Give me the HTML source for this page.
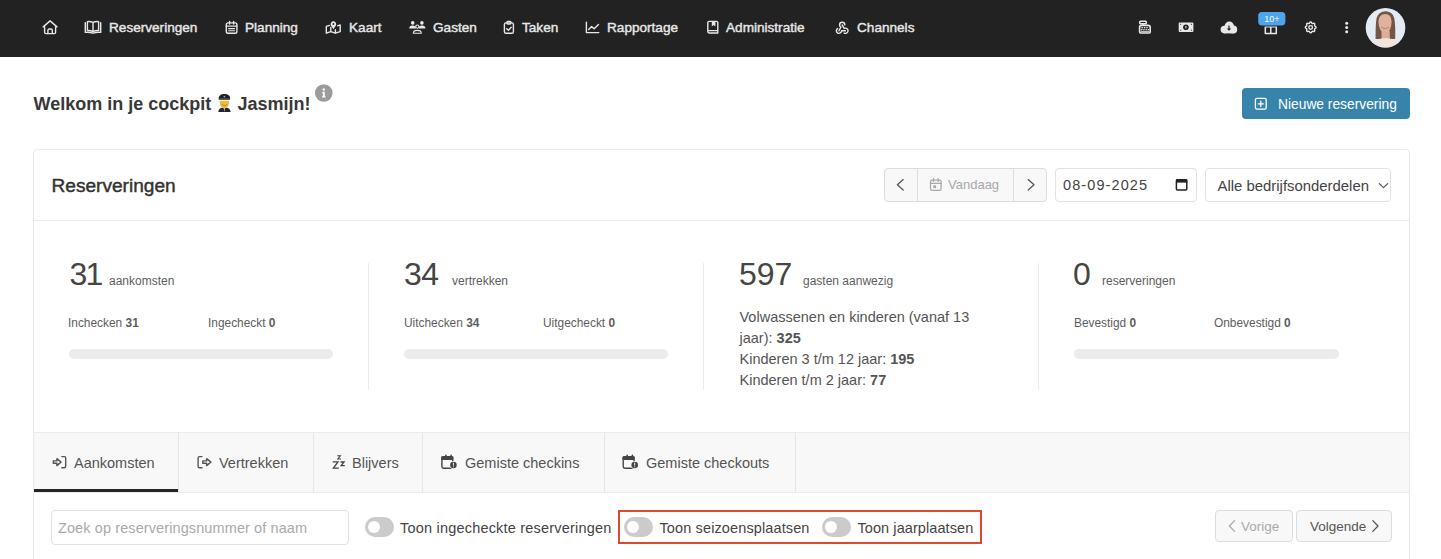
<!DOCTYPE html>
<html><head><meta charset="utf-8">
<style>
*{box-sizing:border-box;margin:0;padding:0}
html,body{width:1441px;height:559px;overflow:hidden;background:#fff;font-family:"Liberation Sans",sans-serif;color:#333}
.t{position:absolute;white-space:nowrap;line-height:1}
#nav{position:absolute;left:0;top:0;width:1441px;height:57px;background:#222}
.ni{color:#e8e8e8;font-size:13.6px;font-weight:normal;-webkit-text-stroke:0.4px #e8e8e8;top:21.3px}
svg{display:block}
#ov{position:absolute;left:0;top:0;width:1441px;height:559px}
.box{position:absolute}
</style></head><body>
<div id="nav"></div>
<div class="t ni" style="left:109px">Reserveringen</div>
<div class="t ni" style="left:245px">Planning</div>
<div class="t ni" style="left:349px">Kaart</div>
<div class="t ni" style="left:433px">Gasten</div>
<div class="t ni" style="left:522px">Taken</div>
<div class="t ni" style="left:607px">Rapportage</div>
<div class="t ni" style="left:726px">Administratie</div>
<div class="t ni" style="left:857px">Channels</div>

<!-- title -->
<div class="t" style="left:33.5px;top:94.5px;font-size:18px;font-weight:bold;color:#383838">Welkom in je cockpit</div>
<div class="t" style="left:237.5px;top:94.5px;font-size:18px;font-weight:bold;color:#383838">Jasmijn!</div>

<!-- new button -->
<div class="box" style="left:1242px;top:88px;width:168px;height:31px;border-radius:4px;background:#3784aa"></div>
<div class="t" style="left:1278px;top:98px;font-size:13.8px;color:#fff">Nieuwe reservering</div>

<!-- card -->
<div class="box" style="left:33px;top:149px;width:1377px;height:430px;border:1px solid #e9e9e9;border-radius:4px"></div>
<div class="box" style="left:34px;top:220px;width:1375px;height:1px;background:#ececec"></div>
<div class="t" style="left:51.5px;top:176px;font-size:19.1px;-webkit-text-stroke:0.45px #333;color:#333">Reserveringen</div>

<!-- button group -->
<div class="box" style="left:884px;top:168px;width:163px;height:34px;border:1px solid #dcdcdc;border-radius:4px;background:#f8f8f8"></div>
<div class="box" style="left:917px;top:169px;width:1px;height:32px;background:#dcdcdc"></div>
<div class="box" style="left:1013px;top:169px;width:1px;height:32px;background:#dcdcdc"></div>
<div class="t" style="left:948px;top:178px;font-size:13px;color:#a8a8a8">Vandaag</div>
<!-- date -->
<div class="box" style="left:1055px;top:168px;width:142px;height:34px;border:1px solid #e2e2e2;border-radius:4px;background:#fff"></div>
<div class="t" style="left:1063px;top:178px;font-size:14.5px;letter-spacing:1.1px;color:#444">08-09-2025</div>
<!-- select -->
<div class="box" style="left:1205px;top:168px;width:186px;height:34px;border:1px solid #e2e2e2;border-radius:4px;background:#fff"></div>
<div class="t" style="left:1217.5px;top:178.5px;font-size:14.9px;color:#444">Alle bedrijfsonderdelen</div>

<!-- stats -->
<div class="t" style="left:69.5px;top:257.5px;font-size:32px;letter-spacing:-1.8px;color:#454545">31</div>
<div class="t" style="left:109px;top:275px;font-size:12px;color:#5e5e5e">aankomsten</div>
<div class="t" style="left:68px;top:318px;font-size:11.9px;color:#5e5e5e">Inchecken <b>31</b></div>
<div class="t" style="left:208px;top:318px;font-size:11.9px;color:#5e5e5e">Ingecheckt <b>0</b></div>
<div class="box" style="left:69px;top:349px;width:264px;height:10px;border-radius:5px;background:#ececec"></div>
<div class="box" style="left:368px;top:263px;width:1px;height:127px;background:#ececec"></div>

<div class="t" style="left:404px;top:257.5px;font-size:32px;letter-spacing:-0.6px;color:#454545">34</div>
<div class="t" style="left:452px;top:275px;font-size:12px;color:#5e5e5e">vertrekken</div>
<div class="t" style="left:404px;top:318px;font-size:11.9px;color:#5e5e5e">Uitchecken <b>34</b></div>
<div class="t" style="left:543px;top:318px;font-size:11.9px;color:#5e5e5e">Uitgecheckt <b>0</b></div>
<div class="box" style="left:404px;top:349px;width:264px;height:10px;border-radius:5px;background:#ececec"></div>
<div class="box" style="left:703px;top:263px;width:1px;height:127px;background:#ececec"></div>

<div class="t" style="left:739px;top:257.5px;font-size:32px;color:#454545">597</div>
<div class="t" style="left:803px;top:275px;font-size:12px;color:#5e5e5e">gasten aanwezig</div>
<div class="t" style="left:739.5px;top:307px;font-size:14.5px;color:#555;line-height:21px;white-space:normal;width:250px">Volwassenen en kinderen (vanaf 13<br>jaar): <b>325</b><br>Kinderen 3 t/m 12 jaar: <b>195</b><br>Kinderen t/m 2 jaar: <b>77</b></div>
<div class="box" style="left:1038px;top:263px;width:1px;height:127px;background:#ececec"></div>

<div class="t" style="left:1073px;top:257.5px;font-size:32px;color:#454545">0</div>
<div class="t" style="left:1102px;top:275px;font-size:12px;color:#5e5e5e">reserveringen</div>
<div class="t" style="left:1074px;top:318px;font-size:11.9px;color:#5e5e5e">Bevestigd <b>0</b></div>
<div class="t" style="left:1214px;top:318px;font-size:11.9px;color:#5e5e5e">Onbevestigd <b>0</b></div>
<div class="box" style="left:1074px;top:349px;width:265px;height:10px;border-radius:5px;background:#ececec"></div>

<!-- tabs -->
<div class="box" style="left:34px;top:432px;width:1375px;height:61px;background:#f8f8f8;border-top:1px solid #ebebeb;border-bottom:1px solid #ebebeb"></div>
<div class="box" style="left:178px;top:433px;width:1px;height:59px;background:#e6e6e6"></div>
<div class="box" style="left:313px;top:433px;width:1px;height:59px;background:#e6e6e6"></div>
<div class="box" style="left:422px;top:433px;width:1px;height:59px;background:#e6e6e6"></div>
<div class="box" style="left:604px;top:433px;width:1px;height:59px;background:#e6e6e6"></div>
<div class="box" style="left:795px;top:433px;width:1px;height:59px;background:#e6e6e6"></div>
<div class="box" style="left:34px;top:489px;width:144px;height:3px;background:#252525"></div>
<div class="t" style="left:74px;top:456px;font-size:14.5px;color:#555">Aankomsten</div>
<div class="t" style="left:219px;top:456px;font-size:14.5px;color:#555">Vertrekken</div>
<div class="t" style="left:352px;top:456px;font-size:14.5px;color:#555">Blijvers</div>
<div class="t" style="left:465px;top:456px;font-size:14.5px;color:#555">Gemiste checkins</div>
<div class="t" style="left:646px;top:456px;font-size:14.5px;color:#555">Gemiste checkouts</div>

<!-- filter row -->
<div class="box" style="left:51px;top:510px;width:298px;height:35px;border:1px solid #e2e2e2;border-radius:4px;background:#fff"></div>
<div class="t" style="left:58px;top:521px;font-size:14.5px;letter-spacing:0.1px;color:#aaa">Zoek op reserveringsnummer of naam</div>
<div class="box" style="left:365px;top:517px;width:29px;height:20px;border-radius:10px;background:#cbcbcb"></div>
<div class="box" style="left:368px;top:521px;width:12px;height:12px;border-radius:50%;background:#fff"></div>
<div class="t" style="left:400px;top:521px;font-size:14.5px;letter-spacing:0.2px;color:#444">Toon ingecheckte reserveringen</div>

<div class="box" style="left:618px;top:510px;width:364px;height:34px;border:2px solid #dc4830"></div>
<div class="box" style="left:624px;top:517px;width:29px;height:20px;border-radius:10px;background:#cbcbcb"></div>
<div class="box" style="left:627px;top:521px;width:12px;height:12px;border-radius:50%;background:#fff"></div>
<div class="t" style="left:659.5px;top:521px;font-size:14.5px;letter-spacing:0.12px;color:#444">Toon seizoensplaatsen</div>
<div class="box" style="left:822px;top:517px;width:29px;height:20px;border-radius:10px;background:#cbcbcb"></div>
<div class="box" style="left:825px;top:521px;width:12px;height:12px;border-radius:50%;background:#fff"></div>
<div class="t" style="left:857.5px;top:521px;font-size:14.5px;letter-spacing:0.08px;color:#444">Toon jaarplaatsen</div>

<div class="box" style="left:1215px;top:510px;width:78px;height:32px;border:1px solid #dcdcdc;border-radius:4px;background:#f8f8f8"></div>
<div class="t" style="left:1241px;top:520px;font-size:13.5px;color:#aaa">Vorige</div>
<div class="box" style="left:1296px;top:510px;width:96px;height:32px;border:1px solid #dcdcdc;border-radius:4px;background:#f8f8f8"></div>
<div class="t" style="left:1310px;top:520px;font-size:13.5px;color:#555">Volgende</div>

<svg id="ov" width="1441" height="559" viewBox="0 0 1441 559" fill="none" stroke-linecap="round" stroke-linejoin="round">
<g stroke="#e8e8e8" stroke-width="1.4">
 <!-- home -->
 <path d="M44.6,26.9 H43.2 L50.1,20.9 L57,26.9 H55.6 M44.6,26.9 V32.2 a1.4,1.4 0 0 0 1.4,1.4 H54.2 a1.4,1.4 0 0 0 1.4,-1.4 V26.9 M47.9,33.6 V30.3 a1.3,1.3 0 0 1 1.3,-1.3 H51 a1.3,1.3 0 0 1 1.3,1.3 V33.6"/>
 <!-- book -->
 <path d="M85.3,22.6 V32.4 Q89.3,31.9 93,33.2 Q96.7,31.9 100.7,32.4 V22.6"/>
 <path d="M87.4,21.6 V30.6 Q90.3,30.3 93,31.6 Q95.7,30.3 98.6,30.6 V21.6 Q95.7,21.2 93,22.4 Q90.3,21.2 87.4,21.6 Z M93,22.4 V31.6"/>
 <!-- planning calendar -->
 <rect x="226.3" y="22.9" width="10.6" height="10.3" rx="1.8"/>
 <path d="M229.6,21.4 V24 M233.6,21.4 V24 M226.3,26.1 H236.9"/>
 <path d="M228.6,28.6 H234.6 M228.6,30.8 H234.6" stroke-width="1.1"/>
 <!-- kaart map -->
 <path d="M329.5,25.4 L326.3,26.4 V33.2 L330.8,31.6 L335.4,33.2 L340.2,31.6 V24.9 L337.6,25.8 M330.8,27.5 V31.6 M335.4,29.6 V33.2"/>
 <!-- taken clipboard -->
 <rect x="504.4" y="22.9" width="9" height="10.4" rx="1.6"/>
 <rect x="506.9" y="21.4" width="4" height="2.6" rx="0.9"/>
 <path d="M506.7,28.7 L508.4,30.3 L511.2,27.3"/>
 <!-- rapportage chart -->
 <path d="M586.4,22.3 V32.6 H598.8 M588.7,29.6 L591.6,26.6 L594.1,28.7 L598.5,24.6"/>
 <!-- administratie -->
 <path d="M707.8,22.8 a1.4,1.4 0 0 1 1.4,-1.4 H716.4 a1.4,1.4 0 0 1 1.4,1.4 V33 H709.2 a1.4,1.4 0 0 1 -1.4,-1.4 Z M707.8,30.6 H717.8"/>
 <!-- channels webhook -->
 <g transform="translate(834.4,19.7) scale(0.65)" stroke-width="2.2">
  <path d="M4.876 13.61a4 4 0 1 0 6.124 3.39h6"/>
  <path d="M15.066 20.502a4 4 0 1 0 1.934 -7.502c-.706 0 -1.424 .179 -2 .5l-3 -5.5"/>
  <path d="M16 8a4 4 0 1 0 -8 0c0 1.506 .77 2.818 2 3.5l-3 5.5"/>
 </g>
 <!-- gift -->
 <path d="M1265.3,26.8 V33.4 H1276.3 V26.8 Z M1270.8,26.6 V33.4" stroke-width="1.5"/>
 <!-- gear -->
 <g transform="translate(1303.5,20.2) scale(0.6)" stroke-width="2.3">
  <path d="M10.325 4.317c.426 -1.756 2.924 -1.756 3.35 0a1.724 1.724 0 0 0 2.573 1.066c1.543 -.94 3.31 .826 2.37 2.37a1.724 1.724 0 0 0 1.065 2.572c1.756 .426 1.756 2.924 0 3.35a1.724 1.724 0 0 0 -1.066 2.573c.94 1.543 -.826 3.31 -2.37 2.37a1.724 1.724 0 0 0 -2.572 1.065c-.426 1.756 -2.924 1.756 -3.35 0a1.724 1.724 0 0 0 -2.573 -1.066c-1.543 .94 -3.31 -.826 -2.37 -2.37a1.724 1.724 0 0 0 -1.065 -2.572c-1.756 -.426 -1.756 -2.924 0 -3.35a1.724 1.724 0 0 0 1.066 -2.573c-.94 -1.543 .826 -3.31 2.37 -2.37c1 .608 2.296 .07 2.572 -1.065z"/>
  <path d="M9 12a3 3 0 1 0 6 0a3 3 0 0 0 -6 0"/>
 </g>
</g>
<g fill="#e8e8e8" stroke="none">
 <!-- gasten -->
 <circle cx="412.7" cy="22.9" r="1.8"/>
 <circle cx="421.9" cy="22.9" r="1.8"/>
 <path d="M409.2,28.4 a3.4,2.9 0 0 1 6.8,0 Z"/>
 <path d="M418.6,28.4 a3.4,2.9 0 0 1 6.8,0 Z"/>
 <!-- dots -->
 <circle cx="1346.7" cy="23.3" r="1.5"/>
 <circle cx="1346.7" cy="27.5" r="1.5"/>
 <circle cx="1346.7" cy="31.7" r="1.5"/>
 <!-- cash register -->
 <rect x="1142.4" y="23" width="1.3" height="2.6"/>
 <rect x="1141.5" y="27" width="1.4" height="1.3"/><rect x="1143.9" y="27" width="1.4" height="1.3"/><rect x="1146.3" y="27" width="1.4" height="1.3"/>
 <rect x="1141" y="29.1" width="1.4" height="1.3"/><rect x="1143.2" y="29.1" width="1.4" height="1.3"/><rect x="1145.4" y="29.1" width="1.4" height="1.3"/><rect x="1147.6" y="29.1" width="1.4" height="1.3"/>
 <rect x="1140.8" y="31.2" width="8.4" height="0.9"/>
 <!-- money -->
 <rect x="1178.7" y="22.4" width="14.7" height="9.7" rx="1"/>
 <!-- cloud -->
 <circle cx="1224.4" cy="29.6" r="3.8"/><circle cx="1229.3" cy="26.3" r="4.7"/><circle cx="1233.3" cy="29.5" r="3.9"/><rect x="1224.4" y="28" width="9" height="5.4"/>
</g>
<g stroke="#e8e8e8" stroke-width="1.1" fill="none">
 <circle cx="417.3" cy="26.6" r="1.6" fill="#222"/>
 <path d="M413.3,33.2 a4,2.8 0 0 1 8,0 Z" fill="#222"/>
 <rect x="1139.7" y="21.3" width="6.6" height="2.4" rx="0.8" stroke-width="1.5"/>
 <path d="M1139.6,27.2 Q1139.6,25.4 1141.6,25.4 H1148.2 Q1150.2,25.4 1150.2,27.2 V32.1 Q1150.2,33 1149.3,33 H1140.5 Q1139.6,33 1139.6,32.1 Z" stroke-width="1.6"/>
</g>
<g fill="#222" stroke="none">
 <!-- kaart pin -->
 <path d="M333.4,29.2 L330.9,25.4 a2.8,2.8 0 1 1 5,0 Z" fill="#e8e8e8"/>
 <circle cx="333.4" cy="24" r="0.9"/>

 <!-- money -->
 <circle cx="1185.9" cy="27.2" r="2.8"/>
 <rect x="1180.2" y="23.8" width="1" height="1"/>
 <rect x="1190.9" y="23.8" width="1" height="1"/>
 <rect x="1180.2" y="29.7" width="1" height="1"/>
 <rect x="1190.9" y="29.7" width="1" height="1"/>
 <!-- cloud arrow -->
 <path d="M1228.4,25.4 H1229.6 V28.4 H1231.3 L1229,30.8 L1226.7,28.4 H1228.4 Z"/>
 <!-- administratie ribbon notch -->
</g>
<rect x="1185.4" y="26" width="1" height="2.4" fill="#e8e8e8"/>
<path d="M711.8,21.4 H715.4 V26.6 L713.6,25.1 L711.8,26.6 Z" fill="#e8e8e8"/>
<!-- emoji police -->
<path d="M218.3,112 Q218.5,107.6 224.4,107.3 Q230.3,107.6 230.6,112 Z" fill="#1d2433"/>
<path d="M223.6,107.8 L224.4,112 L225.2,107.8 Z" fill="#c9c6b8"/>
<path d="M219.6,101 Q219.4,108.2 224.4,108.4 Q229.4,108.2 229.2,101 Z" fill="#efbd45"/>
<path d="M221.8,104.8 Q224.4,106.8 227,104.8" stroke="#b07a1a" stroke-width="0.8" fill="none"/>
<path d="M218.6,99.4 Q218.2,94.2 224.4,94.1 Q230.6,94.2 230.2,99.4 Z" fill="#1b1f29"/>
<rect x="219.3" y="98.3" width="10.2" height="1.8" fill="#5d5a48"/>
<circle cx="224.4" cy="96.6" r="0.9" fill="#b9a65a"/>
<!-- info -->
<circle cx="323.8" cy="93" r="8.8" fill="#9b9b9b"/>
<circle cx="323.8" cy="89.5" r="1.2" fill="#fff"/>
<path d="M322.1,91.7 H324.8 V96.3 H325.6 V97.4 H322 V96.3 H322.8 V92.8 H322.1 Z" fill="#fff"/>
<!-- header controls icons -->
<g stroke="#555" stroke-width="1.3" fill="none">
 <path d="M903.2,179.6 L897.4,184.8 L903.2,190"/>
 <path d="M1028.2,179.6 L1034,184.8 L1028.2,190"/>
</g>
<g stroke="#a8a8a8" stroke-width="1.3" fill="none">
 <rect x="930.5" y="180.2" width="10.6" height="10.2" rx="1.6"/>
 <path d="M933.5,178.6 V181.4 M938.1,178.6 V181.4 M930.5,183.4 H941.1"/>
</g>
<rect x="933.3" y="185.3" width="2.8" height="2.8" fill="#a8a8a8"/>
<g stroke="#222" stroke-width="1.5" fill="none">
 <rect x="1176.4" y="179.8" width="10.4" height="10.3" rx="1"/>
</g>
<rect x="1176" y="179.4" width="11.2" height="3.2" fill="#222"/>
<path d="M1379.3,183.6 L1383.5,187.6 L1387.7,183.6" stroke="#555" stroke-width="1.2" fill="none"/>
<!-- new button plus -->
<g stroke="#fff" stroke-width="1.3" fill="none">
 <rect x="1255.4" y="98.4" width="10.8" height="10.8" rx="1.4"/>
 <path d="M1260.8,101.2 V106.4 M1258.2,103.8 H1263.4"/>
</g>
<!-- pagination chevrons -->
<path d="M1234.6,520.6 L1229.4,526 L1234.6,531.4" stroke="#aaa" stroke-width="1.3" fill="none"/>
<path d="M1372.8,520.6 L1378,526 L1372.8,531.4" stroke="#555" stroke-width="1.3" fill="none"/>
<!-- tab icons -->
<g stroke="#555" stroke-width="1.4" fill="none">
 <path d="M53.3,460.9 H56.9 V458.6 L61,462.1 L56.9,465.6 V463.3 H53.3 Z"/>
 <path d="M61.8,456.6 H64.2 a1.5,1.5 0 0 1 1.5,1.5 V466.2 a1.5,1.5 0 0 1 -1.5,1.5 H61.8"/>
 <path d="M202,456.6 H199.6 a1.5,1.5 0 0 0 -1.5,1.5 V466.2 a1.5,1.5 0 0 0 1.5,1.5 H202"/>
 <path d="M202.8,460.9 H206.6 V458.6 L210.9,462.1 L206.6,465.6 V463.3 H202.8 Z"/>
</g>
<g stroke="#444" stroke-width="1.3" fill="none" stroke-linecap="square" stroke-linejoin="miter">
 <path d="M333.4,461.9 H338 L333.4,468.1 H338.2"/>
 <path d="M341.2,462 H344 L341.2,465.6 H344.1"/>
 <path d="M337.8,455.8 H340.4 L337.8,459 H340.5" stroke-width="1.1"/>
</g>
<g transform="translate(0,0)">
 <rect x="441.9" y="456.8" width="10.8" height="11.4" rx="1.6" stroke="#444" stroke-width="1.4" fill="none"/>
 <rect x="441.2" y="456.3" width="12.2" height="3.6" rx="1" fill="#444"/>
 <rect x="445.2" y="454.6" width="1.4" height="3" rx="0.6" fill="#444"/>
 <rect x="450.4" y="454.6" width="1.4" height="3" rx="0.6" fill="#444"/>
 <circle cx="453.4" cy="465" r="3.9" fill="#f7f7f7"/>
 <circle cx="453.4" cy="465" r="3.3" fill="#444"/>
 <rect x="452.9" y="462.6" width="1" height="3" fill="#eee"/>
 <rect x="452.9" y="466.3" width="1" height="1" fill="#eee"/>
</g>
<g transform="translate(181.3,0)">
 <rect x="441.9" y="456.8" width="10.8" height="11.4" rx="1.6" stroke="#444" stroke-width="1.4" fill="none"/>
 <rect x="441.2" y="456.3" width="12.2" height="3.6" rx="1" fill="#444"/>
 <rect x="445.2" y="454.6" width="1.4" height="3" rx="0.6" fill="#444"/>
 <rect x="450.4" y="454.6" width="1.4" height="3" rx="0.6" fill="#444"/>
 <circle cx="453.4" cy="465" r="3.9" fill="#f7f7f7"/>
 <circle cx="453.4" cy="465" r="3.3" fill="#444"/>
 <rect x="452.9" y="462.6" width="1" height="3" fill="#eee"/>
 <rect x="452.9" y="466.3" width="1" height="1" fill="#eee"/>
</g>
<!-- badge -->
<rect x="1257.6" y="11.4" width="28.4" height="14.6" rx="4.2" fill="#4ea5e9" stroke="#222" stroke-width="1.2"/>
<text x="1271.8" y="21.8" font-family="Liberation Sans" font-size="9" fill="#f4f8fc" text-anchor="middle">10+</text>
<!-- avatar -->
<filter id="bl" x="-10%" y="-10%" width="120%" height="120%"><feGaussianBlur stdDeviation="0.5"/></filter><clipPath id="av"><circle cx="1385.5" cy="27.7" r="19.8"/></clipPath>
<g clip-path="url(#av)">
 <rect x="1365" y="7" width="41" height="42" fill="#e3ecf2"/>
 <g filter="url(#bl)">
 <path d="M1375.6,39 Q1375.4,25 1376.6,18 Q1378.8,11.3 1385.6,11.3 Q1392.3,11.3 1394.2,18 Q1395.6,25 1395.2,39 Z" fill="#735745"/>
 <path d="M1381.5,31 H1389.8 V39 H1381.5 Z" fill="#d9ad98"/>
 <path d="M1378.4,21.5 Q1378.8,14.2 1385.3,14 Q1391.4,14.2 1391.6,21.5 Q1391.4,31.8 1385.2,33.2 Q1378.8,31.8 1378.4,21.5 Z" fill="#dfb29c"/>
 <path d="M1381.6,27.5 Q1385.2,30.2 1388.8,27.5" stroke="#b27a66" stroke-width="0.9" fill="none"/>
 <path d="M1367,50 Q1369,39.5 1385.5,38 Q1402,39.5 1404,50 Z" fill="#f0e4dd"/>
</g>
</g>
</svg>
</body></html>
